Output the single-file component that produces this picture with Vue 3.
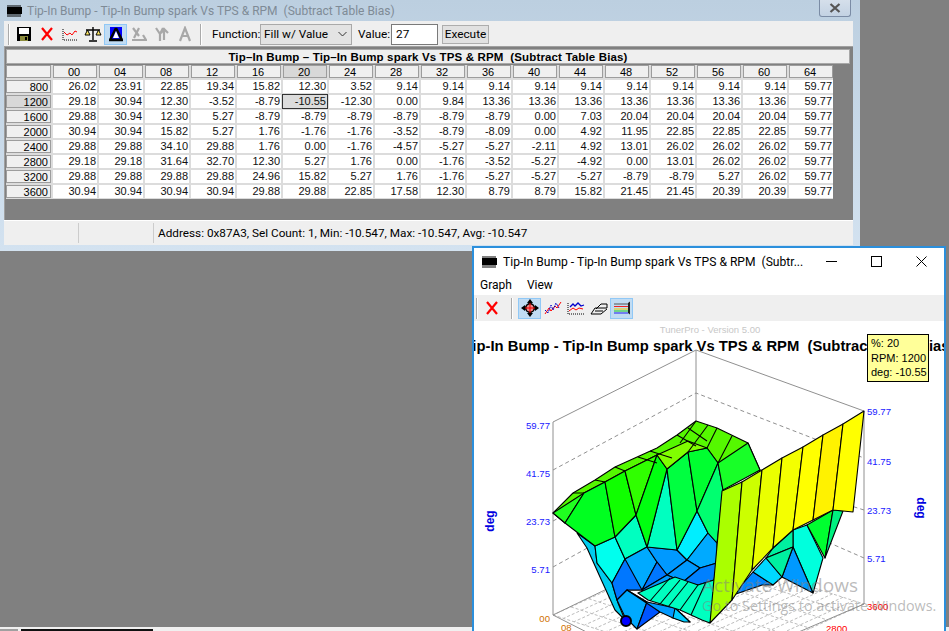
<template>
  <div class="desktop">
    <section class="table-window">
      <header class="tw-title">
        <svg class="chip" width="17" height="13" viewBox="0 0 17 13">
          <rect x="1" y="3" width="15" height="7" fill="#000" />
          <path d="M2 1v12M4 1v12M6 1v12M8 1v12M10 1v12M12 1v12M14 1v12" stroke="#000" stroke-width="1" />
        </svg>
        <span class="tw-caption">Tip-In Bump - Tip-In Bump spark Vs TPS &amp; RPM&nbsp; (Subtract Table Bias)</span>
        <button class="tw-close">
          <svg width="12" height="10" viewBox="0 0 12 10">
            <path d="M1.5 1l9 8M10.5 1l-9 8" stroke="#555" stroke-width="2.2" fill="none" />
          </svg>
        </button>
      </header>
      <div class="tw-body">
        <div class="toolbar">
          <span class="grip"></span>
          <span class="tool">
            <svg width="16" height="16" viewBox="0 0 16 16">
              <path d="M1 1h14v14H1z" fill="#000" />
              <rect x="3" y="2" width="10" height="6" fill="#fff" />
              <rect x="4" y="10" width="8" height="5" fill="#8c8c3c" />
              <rect x="9" y="11" width="2" height="3" fill="#000" />
            </svg>
          </span>
          <span class="tool">
            <svg width="16" height="16" viewBox="0 0 16 16">
              <path d="M3 2l10 12M13 2L3 14" stroke="#f00" stroke-width="2.2" fill="none" />
            </svg>
          </span>
          <span class="tool">
            <svg width="16" height="16" viewBox="0 0 16 16">
              <path d="M1 3v11h15" stroke="#000" stroke-dasharray="1 1" fill="none" />
              <path d="M2 6l3 3 3-2 2 2 3-4 2 1" stroke="#f00" fill="none" />
            </svg>
          </span>
          <span class="tool">
            <svg width="18" height="16" viewBox="0 0 18 16">
              <path d="M9 1v13M5 15h8M2 4h14" stroke="#000" stroke-width="1.4" fill="none" />
              <path d="M1 9l2.500-5L6 9zM12 9l2.500-5L17 9z" fill="#ffe860" stroke="#000" />
            </svg>
          </span>
          <span class="tool on">
            <svg width="16" height="16" viewBox="0 0 16 16">
              <rect x="2" y="1" width="12" height="12" fill="#00f" />
              <path d="M8 2L2 14M8 2l6 12M1 14h14" stroke="#000" stroke-width="2.400" fill="none" />
              <path d="M8 5l-3 7h6z" fill="#fff" />
            </svg>
          </span>
          <span class="tool">
            <svg width="16" height="16" viewBox="0 0 16 16">
              <path d="M2 2l6 8M8 2L3 12M1 14h14l-3-5" stroke="#a8a8a8" stroke-width="2.200" fill="none" />
            </svg>
          </span>
          <span class="tool">
            <svg width="16" height="16" viewBox="0 0 16 16">
              <path d="M2 2l4 6M9 2L6 8v7M10 14V4M7 7l3-4 4 4" stroke="#a8a8a8" stroke-width="2.200" fill="none" />
            </svg>
          </span>
          <span class="tool">
            <svg width="16" height="16" viewBox="0 0 16 16">
              <path d="M3 15L8 2l5 13M5 10h6" stroke="#a8a8a8" stroke-width="2.200" fill="none" />
            </svg>
          </span>
          <span class="grip end"></span>
          <label class="tb-label">Function:</label>
          <span class="select">Fill w/ Value
            <svg width="9" height="6" viewBox="0 0 9 6"><path d="M.5 1l4 4 4-4" stroke="#333" fill="none" /></svg>
          </span>
          <label class="tb-label value">Value:</label>
          <span class="input">27</span>
          <span class="exec">Execute</span>
        </div>
        <div class="grid-pane">
          <div class="grid-title">Tip–In Bump – Tip–In Bump spark Vs TPS &amp; RPM&nbsp; (Subtract Table Bias)</div>
          <div class="grid">
            <div class="corner"></div>
            <div v-for="c in columns" :key="c" class="col-head" :class="{ picked: c === '20' }">{{ c }}</div>
            <template v-for="row in rows" :key="row.rpm">
              <div class="row-head" :class="{ picked: row.rpm === 1200 }">{{ row.rpm }}</div>
              <div
                v-for="(v, i) in row.values"
                :key="i"
                class="cell"
                :class="{ selected: row.rpm === 1200 && i === 5 }"
              >{{ v }}</div>
            </template>
          </div>
        </div>
        <footer class="status">
          <span class="st-a"></span>
          <span class="st-b"></span>
          <span class="st-c">Address: 0x87A3, Sel Count: 1, Min: -10.547, Max: -10.547, Avg: -10.547</span>
        </footer>
      </div>
    </section>

    <div class="under-strip">
      <span class="under-a"></span>
      <span class="under-b"></span>
    </div>

    <section class="graph-window">
      <header class="gw-title">
        <svg width="17" height="13" viewBox="0 0 17 13">
          <rect x="1" y="3" width="15" height="7" fill="#000" />
          <path d="M2 1v12M4 1v12M6 1v12M8 1v12M10 1v12M12 1v12M14 1v12" stroke="#000" />
        </svg>
        <span class="gw-caption">Tip-In Bump - Tip-In Bump spark Vs TPS &amp; RPM&nbsp; (Subtr...</span>
        <svg class="wbtn" width="11" height="11" viewBox="0 0 11 11"><path d="M0 5.500h11" stroke="#000" /></svg>
        <svg class="wbtn" width="11" height="11" viewBox="0 0 11 11"><rect x=".5" y=".5" width="10" height="10" fill="none" stroke="#000" /></svg>
        <svg class="wbtn" width="11" height="11" viewBox="0 0 11 11"><path d="M.5.500l10 10M10.500.500l-10 10" stroke="#000" /></svg>
      </header>
      <nav class="gw-menu">
        <span>Graph</span>
        <span>View</span>
      </nav>
      <div class="gw-tools">
        <span class="grip"></span>
        <span class="tool">
          <svg width="16" height="16" viewBox="0 0 16 16">
            <path d="M3 2l10 12M13 2L3 14" stroke="#f00" stroke-width="2.200" fill="none" />
          </svg>
        </span>
        <span class="grip end"></span>
        <span class="tool on">
          <svg width="18" height="18" viewBox="0 0 18 18">
            <path d="M9 0l3 4h-1.500v3.500H14V6l4 3-4 3v-1.500h-3.500V14H12l-3 4-3-4h1.500v-3.500H4V12L0 9l4-3v1.500h3.500V4H6z" fill="#000" />
            <circle cx="9" cy="9" r="5" fill="#000" />
            <circle cx="9" cy="9" r="3.500" fill="#e88" />
            <path d="M9 4v10M4 9h10" stroke="#e00" />
          </svg>
        </span>
        <span class="tool">
          <svg width="18" height="16" viewBox="0 0 18 16">
            <path d="M1 14l4-6 2 3 4-5 2 2 4-6" stroke="#f00" fill="none" />
            <path d="M1 10l3 3 3-8 2 5 3-7 3 5" stroke="#00c" stroke-dasharray="2 1" fill="none" />
          </svg>
        </span>
        <span class="tool">
          <svg width="18" height="16" viewBox="0 0 18 16">
            <path d="M1 3v11h16" stroke="#000" stroke-dasharray="1 1" fill="none" />
            <path d="M2 11l4-3 3 2 3-2 4 1" stroke="#f00" fill="none" />
            <path d="M3 7l3-3 2 2 3-3 3 3 3-1" stroke="#00c" stroke-width="1.300" fill="none" />
          </svg>
        </span>
        <span class="tool">
          <svg width="18" height="16" viewBox="0 0 18 16">
            <path d="M1 14l4-6h12v-4h-6L6 9M1 14h10l6-5M5 11h8" stroke="#000" fill="none" />
          </svg>
        </span>
        <span class="tool on">
          <svg width="18" height="16" viewBox="0 0 18 16">
            <path d="M1 4h14" stroke="#555" />
            <path d="M1 6.500h14" stroke="#e22" />
            <path d="M1 9h14" stroke="#ec0" />
            <path d="M1 11h14" stroke="#2c2" />
            <path d="M1 13h14" stroke="#22e" />
            <path d="M15 3l2-1.500v13L15 13z" fill="#222" />
          </svg>
        </span>
      </div>
      <div class="gw-plot">
        <svg class="plot" width="470" height="310" viewBox="474 321 470 310">
          <text x="710" y="333" class="brand">TunerPro - Version 5.00</text>
          <text x="709" y="351" class="heading">Tip-In Bump - Tip-In Bump spark Vs TPS &amp; RPM&nbsp; (Subtract Table Bias)</text>

          <path d="M553 422L696 350L864 411M696 350V430M553 422V615M864 411V604" class="wall" />
          <path d="M553 470L696 393L864 458M553 521L640 474M553 567L620 530M864 510L800 490M864 558L800 530" class="wall dash" />
          <path :d="floorPath" class="floor" />
          <path d="M553 615L622 650M553 615L640 573M864 604L780 640" class="wall" />

          <polygon v-for="(f, i) in faces" :key="i" :points="f.p" :fill="f.c" class="face" />
          <path :d="meshLines" class="mesh" />

          <circle cx="626" cy="621" r="5" fill="#00f" stroke="#000" stroke-width="2" />

          <text x="550" y="429" class="tick end">59.77</text>
          <text x="550" y="477" class="tick end">41.75</text>
          <text x="550" y="525" class="tick end">23.73</text>
          <text x="550" y="573" class="tick end">5.71</text>
          <text x="550" y="622" class="tick end orange">00</text>
          <text x="561" y="631" class="tick orange">08</text>
          <text x="867" y="415" class="tick">59.77</text>
          <text x="867" y="465" class="tick">41.75</text>
          <text x="867" y="514" class="tick">23.73</text>
          <text x="867" y="562" class="tick">5.71</text>
          <text x="867" y="610" class="tick red">3600</text>
          <text x="826" y="632" class="tick red">2800</text>

          <text class="axis" transform="translate(494 521) rotate(-90)">deg</text>
          <text class="axis" transform="translate(917 508) rotate(90)">deg</text>

          <text x="702" y="592" class="wm big">Activate Windows</text>
          <text x="702" y="611" class="wm">Go to Settings to activate Windows.</text>
        </svg>
        <div class="tip">
          <div>%: 20</div>
          <div>RPM: 1200</div>
          <div>deg: -10.55</div>
        </div>
      </div>
    </section>
  </div>
</template>

<script setup>
const columns = ["00", "04", "08", "12", "16", "20", "24", "28", "32", "36", "40", "44", "48", "52", "56", "60", "64"]

const rows = [
  { rpm: 800, values: ["26.02", "23.91", "22.85", "19.34", "15.82", "12.30", "3.52", "9.14", "9.14", "9.14", "9.14", "9.14", "9.14", "9.14", "9.14", "9.14", "59.77"] },
  { rpm: 1200, values: ["29.18", "30.94", "12.30", "-3.52", "-8.79", "-10.55", "-12.30", "0.00", "9.84", "13.36", "13.36", "13.36", "13.36", "13.36", "13.36", "13.36", "59.77"] },
  { rpm: 1600, values: ["29.88", "30.94", "12.30", "5.27", "-8.79", "-8.79", "-8.79", "-8.79", "-8.79", "-8.79", "0.00", "7.03", "20.04", "20.04", "20.04", "20.04", "59.77"] },
  { rpm: 2000, values: ["30.94", "30.94", "15.82", "5.27", "1.76", "-1.76", "-1.76", "-3.52", "-8.79", "-8.09", "0.00", "4.92", "11.95", "22.85", "22.85", "22.85", "59.77"] },
  { rpm: 2400, values: ["29.88", "29.88", "34.10", "29.88", "1.76", "0.00", "-1.76", "-4.57", "-5.27", "-5.27", "-2.11", "4.92", "13.01", "26.02", "26.02", "26.02", "59.77"] },
  { rpm: 2800, values: ["29.18", "29.18", "31.64", "32.70", "12.30", "5.27", "1.76", "0.00", "-1.76", "-3.52", "-5.27", "-4.92", "0.00", "13.01", "26.02", "26.02", "59.77"] },
  { rpm: 3200, values: ["29.88", "29.88", "29.88", "29.88", "24.96", "15.82", "5.27", "1.76", "-1.76", "-5.27", "-5.27", "-5.27", "-8.79", "-8.79", "5.27", "26.02", "59.77"] },
  { rpm: 3600, values: ["30.94", "30.94", "30.94", "30.94", "29.88", "29.88", "22.85", "17.58", "12.30", "8.79", "8.79", "15.82", "21.45", "21.45", "20.39", "20.39", "59.77"] },
]

// floor of the 3d plot, 16 x 8 cells
const floorLines = []
const origin = [696, 550]
const u = [168 / 16, 54 / 16]
const v = [-143 / 8, 65 / 8]
const at = (i, j) => `${origin[0] + i * u[0] + j * v[0]} ${origin[1] + i * u[1] + j * v[1]}`
for (let i = 0; i <= 16; i++) floorLines.push(`M${at(i, 0)}L${at(i, 8)}`)
for (let j = 0; j <= 8; j++) floorLines.push(`M${at(0, j)}L${at(16, j)}`)
const floorPath = floorLines.join("")

const faces = [
  { c: "#55f800", p: "553,513 573,493 595,480 615,467 657,448 677,435 696,421 717,428 748,443 760,470 735,480 718,463 707,448 688,452 667,469 657,455 625,471 605,482 584,493 565,523" },
  { c: "#00ccee", p: "577,533 595,546 597,563 612,583 618,603 625,620 615,610 600,577 587,548" },
  { c: "#00ffee", p: "595,546 615,537 625,559 612,583 597,563" },
  { c: "#00ffc0", p: "615,537 636,515 647,547 625,559" },
  { c: "#00aaff", p: "625,559 647,547 657,562 642,590 627,590" },
  { c: "#0077ff", p: "625,559 612,583 617,600 627,590 642,590" },
  { c: "#0099ff", p: "647,547 677,550 687,560 667,575 657,562" },
  { c: "#0077ff", p: "657,562 667,575 642,590" },
  { c: "#00eeff", p: "677,550 697,511 708,533 687,560" },
  { c: "#00aaff", p: "708,533 717,543 717,563 700,568 687,560" },
  { c: "#0099ff", p: "687,560 700,568 683,582 667,575" },
  { c: "#0080ff", p: "700,568 717,563 714,580 698,585 683,582" },
  { c: "#0099ff", p: "642,590 667,575 683,582 698,585 675,600 650,600" },
  { c: "#00ffc0", p: "647,547 667,469 677,550" },
  { c: "#20ff20", p: "553,513 584,493 565,523" },
  { c: "#00ff20", p: "565,523 584,493 605,482 615,537 595,546" },
  { c: "#10ff00", p: "605,482 625,471 636,515 615,537" },
  { c: "#30ff00", p: "625,471 657,455 636,515" },
  { c: "#00ff10", p: "657,455 667,469 647,547 636,515" },
  { c: "#00ff40", p: "667,469 688,452 697,511 677,550" },
  { c: "#00ff30", p: "688,452 707,448 718,463 697,511" },
  { c: "#00ff70", p: "718,463 723,490 717,543 708,533 697,511" },
  { c: "#18ff28", p: "718,463 748,443 760,470 723,490" },
  { c: "#80ff00", p: "657,455 688,441 707,448 688,452 667,469" },
  { c: "#00aaff", p: "617,600 627,590 647,602 637,629 625,617" },
  { c: "#0055ff", p: "637,629 647,602 660,612" },
  { c: "#0099ff", p: "627,590 647,602 675,608 690,622 673,618 660,612" },
  { c: "#00ccff", p: "675,608 690,622 684,622 673,618" },
  { c: "#00ffc0", p: "638,593 675,577 698,585 714,580 720,575 710,623 702,620 680,610 648,600" },
  { c: "#0088ff", p: "733,595 753,572 773,585 762,585" },
  { c: "#00d8ff", p: "753,572 766,558 782,577 773,585" },
  { c: "#00ffdd", p: "793,530 807,525 823,558 813,593 793,547" },
  { c: "#0099ff", p: "793,547 813,593 782,577" },
  { c: "#00f0a0", p: "793,530 793,547 766,558 773,548" },
  { c: "#00f0a0", p: "766,558 793,547 782,577" },
  { c: "#00ff30", p: "807,525 833,510 825,558" },
  { c: "#00f080", p: "833,510 843,511 825,558" },
  { c: "#aaff00", p: "722,491 742,482 732,600 710,623" },
  { c: "#ccff00", p: "742,482 762,470 752,570 732,600" },
  { c: "#eaff00", p: "762,470 782,458 773,548 752,570" },
  { c: "#f4ff00", p: "782,458 803,447 793,530 773,548" },
  { c: "#ffff00", p: "803,447 823,435 813,520 793,530" },
  { c: "#fff200", p: "823,435 843,424 833,510 813,520" },
  { c: "#ffff00", p: "843,424 864,411 853,512 833,510" },
]

const meshLines = [
  // lime band across the back of the surface
  "M573 493L584 493M595 480L605 482M615 467L625 471",
  "M638 457L657 463M650 451L672 458M677 435L696 446M688 428L707 441M696 421L680 443M708 425L688 452M717 428L707 448M732 436L718 463",
  // turquoise sheet
  "M650 601L670 578M660 604L680 580M668 607L688 582M680 610L698 585M691 615L706 582",
].join("")
</script>

<style scoped>
.desktop {
  position: relative;
  width: 949px;
  height: 631px;
  overflow: hidden;
  background: #808080;
  font-family: "Liberation Sans", Arial, sans-serif;
  color: #000;
}

.table-window {
  position: absolute;
  left: 0;
  top: 0;
  width: 860px;
  height: 251px;
  background: linear-gradient(#bccfe0, #d3e2f0);
  display: flex;
  flex-direction: column;
}

.tw-title {
  display: flex;
  align-items: center;
  height: 21px;
  padding-left: 6px;
  box-sizing: border-box;
}

.chip {
  margin-right: 4px;
}

.tw-caption {
  flex: 1;
  font-family: Roboto, sans-serif;
  font-size: 12px;
  color: #7f8b96;
  white-space: pre;
}

.tw-close {
  width: 32px;
  height: 17px;
  margin: -4px 9px 0 0;
  padding: 0;
  border: 1px solid #7b8ca5;
  border-top: none;
  border-radius: 0 0 3px 3px;
  background: linear-gradient(#d5dfeb, #c3d2e3);
  display: flex;
  align-items: center;
  justify-content: center;
}

.tw-body {
  flex: 1;
  margin: 0 7px 6px 4px;
  background: #efefef;
  display: flex;
  flex-direction: column;
  min-height: 0;
}

.toolbar {
  display: flex;
  align-items: center;
  height: 25px;
  padding: 1px 0 0 3px;
  box-sizing: border-box;
}

.grip {
  width: 2px;
  height: 21px;
  box-sizing: border-box;
  border-left: 1px solid #aaa;
  border-right: 1px solid #fff;
  margin: 0 2px 0 1px;
}

.toolbar .grip.end {
  margin: 0 10px 0 4px;
}

.gw-tools .grip.end {
  margin: 0 5px 0 8px;
}

.tool {
  width: 23px;
  height: 21px;
  display: flex;
  align-items: center;
  justify-content: center;
  box-sizing: border-box;
}

.tool.on {
  background: #c1dcf3;
  border: 1px solid #90c8f6;
}

.tb-label {
  font-family: Roboto, sans-serif;
  font-size: 11.8px;
  width: 44px;
  margin-right: 4px;
  white-space: nowrap;
}

.tb-label.value {
  width: 28px;
  margin: 0 5px 0 6px;
}

.select {
  width: 92px;
  height: 21px;
  box-sizing: border-box;
  padding: 0 4px 0 3px;
  background: #e3e3e3;
  border: 1px solid #a9a9a9;
  display: flex;
  align-items: center;
  justify-content: space-between;
  font-family: Roboto, sans-serif;
  font-size: 11.8px;
}

.input {
  width: 47px;
  height: 21px;
  box-sizing: border-box;
  padding-left: 4px;
  background: #fff;
  border: 1px solid #7a7a7a;
  display: flex;
  align-items: center;
  font-family: Roboto, sans-serif;
  font-size: 11.8px;
}

.exec {
  width: 47px;
  height: 19px;
  margin-left: 4px;
  box-sizing: border-box;
  background: #e1e1e1;
  border: 1px solid #adadad;
  display: flex;
  align-items: center;
  justify-content: center;
  font-family: Roboto, sans-serif;
  font-size: 11.8px;
}

.grid-pane {
  flex: 1;
  background: #808080;
  border-top: 1px solid #a0a0a0;
  border-left: 1px solid #a0a0a0;
  display: flex;
  flex-direction: column;
  min-height: 0;
}

.grid-title {
  height: 15px;
  margin: 2px 0 0 1px;
  width: 844px;
  box-sizing: border-box;
  background: #efefef;
  border: 1px solid #a8a8a8;
  text-align: center;
  font-size: 11.5px;
  font-weight: bold;
  line-height: 14px;
  letter-spacing: 0.15px;
}

.grid {
  display: grid;
  grid-template-columns: 45px repeat(17, 44px);
  grid-auto-rows: 13px;
  column-gap: 2px;
  row-gap: 2px;
  margin: 1px 0 0 1px;
  padding-bottom: 1px;
  width: 827px;
  background: #dcdcdc;
}

.corner,
.col-head,
.row-head {
  background: #f0f0f0;
  box-shadow: inset 0 0 0 1px #9d9d9d;
  font-size: 11px;
  line-height: 15px;
  overflow: hidden;
}

.col-head {
  text-align: center;
  padding-right: 2px;
}

.row-head {
  text-align: right;
  padding-right: 3px;
  line-height: 14px;
}

.picked {
  background: #d8d8d8;
}

.cell {
  background: #fff;
  text-align: right;
  padding-right: 1px;
  font-size: 11px;
  line-height: 13px;
  color: #111;
  overflow: hidden;
}

.cell.selected {
  background: #dcdcdc;
  box-shadow: 0 0 0 1px #333;
  position: relative;
}

.status {
  height: 25px;
  flex: none;
  border-top: 1px solid #fff;
  box-sizing: border-box;
  display: flex;
  align-items: center;
  font-family: Roboto, sans-serif;
  font-size: 11.75px;
}

.st-a {
  width: 74px;
  height: 20px;
  border-right: 1px solid #ccc;
}

.st-b {
  width: 74px;
  height: 20px;
  border-right: 1px solid #ccc;
}

.st-c {
  padding-left: 4px;
  white-space: pre;
}

.under-strip {
  position: absolute;
  left: 0;
  right: 0;
  bottom: 0;
  height: 4px;
  background: #f0f0f0;
  display: flex;
  align-items: flex-end;
}

.under-a {
  width: 18px;
  height: 2px;
  background: #a0a0a0;
}

.under-b {
  width: 132px;
  height: 2px;
  margin-left: 3px;
  background: #111;
}

.graph-window {
  position: absolute;
  left: 472px;
  top: 246px;
  width: 474px;
  height: 385px;
  box-sizing: border-box;
  border: 2px solid #2b8fdc;
  border-bottom: none;
  background: #fff;
  display: flex;
  flex-direction: column;
}

.gw-title {
  height: 27px;
  display: flex;
  align-items: center;
  padding-left: 7px;
  flex: none;
}

.gw-caption {
  width: 323px;
  margin-left: 5px;
  font-family: Roboto, sans-serif;
  font-size: 12.1px;
  white-space: pre;
  overflow: hidden;
}

.wbtn {
  margin-left: 34px;
}

.gw-caption + .wbtn {
  margin-left: 0;
}

.gw-menu {
  height: 20px;
  flex: none;
  display: flex;
  gap: 15px;
  padding-left: 6px;
  align-items: center;
  font-family: Roboto, sans-serif;
  font-size: 12px;
}

.gw-tools {
  height: 26px;
  flex: none;
  background: #efefef;
  display: flex;
  align-items: center;
  padding-left: 1px;
}

.gw-plot {
  position: relative;
  flex: 1;
  min-height: 0;
}

.plot {
  display: block;
}

.brand {
  font-size: 9.500px;
  fill: #c8c8c8;
  text-anchor: middle;
}

.heading {
  font-size: 14.800px;
  font-weight: bold;
  text-anchor: middle;
  white-space: pre;
}

.wall {
  fill: none;
  stroke: #909090;
  stroke-width: 1;
}

.wall.dash {
  stroke-dasharray: 4 3;
}

.floor {
  fill: none;
  stroke: #bdbdbd;
  stroke-width: 1;
  stroke-dasharray: 3 2;
}

.face {
  stroke: #000;
  stroke-width: 1.100;
  stroke-linejoin: round;
}

.mesh {
  fill: none;
  stroke: #000;
  stroke-width: 1.100;
}

.tick {
  font-size: 9.600px;
  fill: #2020ff;
}

.tick.end {
  text-anchor: end;
}

.tick.orange {
  fill: #d07000;
}

.tick.red {
  fill: #f00;
}

.axis {
  font-size: 12px;
  font-weight: bold;
  fill: #0000e0;
  text-anchor: middle;
}

.wm {
  font-family: "Open Sans", sans-serif;
  font-size: 14.300px;
  fill: rgba(130, 130, 130, 0.55);
}

.wm.big {
  font-size: 19px;
}

.tip {
  position: absolute;
  left: 393px;
  top: 13px;
  width: 62px;
  height: 48px;
  box-sizing: border-box;
  padding: 1px 0 0 3px;
  background: #ffff99;
  border: 1px solid #000;
  font-size: 11px;
  line-height: 14.500px;
  white-space: nowrap;
}
</style>
